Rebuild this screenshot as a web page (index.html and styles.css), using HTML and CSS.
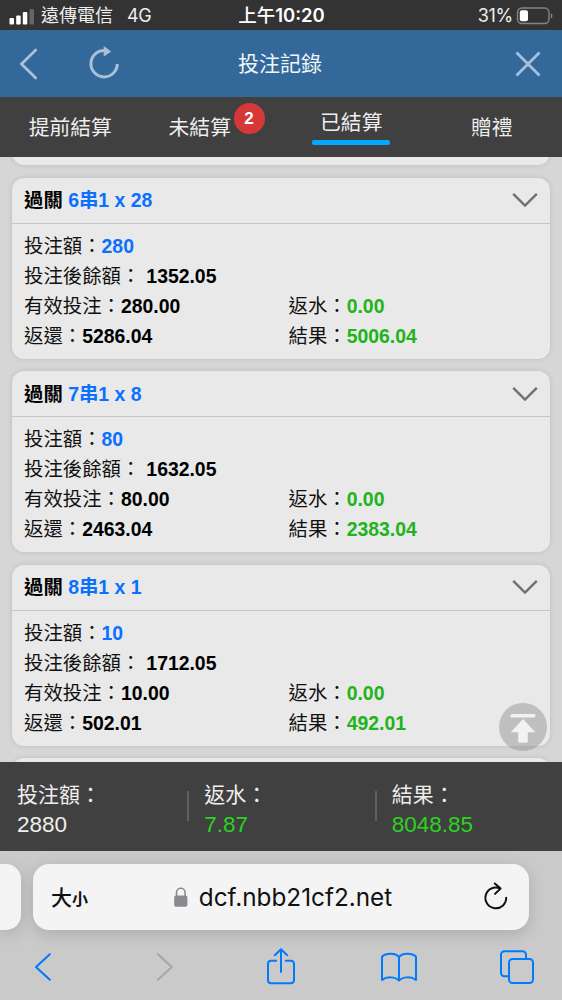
FILE: index.html
```html
<!DOCTYPE html>
<html lang="zh-Hant">
<head>
    <meta charset="UTF-8">
    <meta name="viewport" content="width=device-width, initial-scale=1.0">
    <title>投注記錄</title>
    <link rel="stylesheet" href="styles.css">
</head>
<body>

    <div class="status-bar">
        <div class="status-left">
            <svg class="signal" width="26" height="18" viewBox="0 0 26 18">
                <rect x="0.5" y="11" width="4.5" height="6.500" rx="1" fill="#fff"/>
                <rect x="7.2" y="8.500" width="4.5" height="9" rx="1" fill="#fff"/>
                <rect x="13.8" y="5" width="4.5" height="12.5" rx="1" fill="#fff"/>
                <rect x="20.5" y="2" width="4.5" height="15.5" rx="1" fill="#666"/>
            </svg>
            <span class="carrier">遠傳電信</span>
            <span class="network">4G</span>
        </div>
        <div class="status-time">上午<span class="clock">10:20</span></div>
        <div class="status-right">
            <span class="percent">31%</span>
            <svg width="38" height="18" viewBox="0 0 38 18">
                <rect x="1.500" y="1" width="31.5" height="15.5" rx="4.5" fill="none" stroke="#858585" stroke-width="1.4"/>
                <rect x="3.800" y="3.3" width="8.2" height="11" rx="2" fill="#fff"/>
                <path d="M34.800 6.2a3 3 0 0 1 0 5.4z" fill="#858585"/>
            </svg>
        </div>
    </div>

    <div class="header">
        <div class="header-left">
            <svg width="20" height="34" viewBox="0 0 20 34"><path d="M17.5 2.2 2.5 17l15 14.8" fill="none" stroke="#a9c0d8" stroke-width="2.8"/></svg>
            <svg width="32" height="34" viewBox="0 0 32 34">
                <path d="M16.500 3.500A13.2 13.2 0 1 0 29.300 17" fill="none" stroke="#a9c0d8" stroke-width="3"/>
                <path d="M15.700 -1v10.800L23.200 4.500z" fill="#a9c0d8"/>
            </svg>
        </div>
        <div class="title">投注記錄</div>
        <svg class="close" width="26" height="26" viewBox="0 0 26 26"><path d="M1.5 1.5l23 23M24.5 1.5l-23 23" fill="none" stroke="#a9c0d8" stroke-width="2.8"/></svg>
    </div>

    <div class="tabs">
        <div class="tab">提前結算</div>
        <div class="tab"><span class="tab-label">未結算<span class="badge">2</span></span></div>
        <div class="tab active">已結算</div>
        <div class="tab">贈禮</div>
    </div>

    <div class="list">
        <div class="card card-before"></div>

        <div class="card">
            <div class="card-head">
                <div class="card-name">過關 <span class="blue">6串1 x 28</span></div>
                <svg width="26" height="16" viewBox="0 0 26 16"><path d="M1.2 1.8 13 13.6 24.8 1.8" fill="none" stroke="#707070" stroke-width="2.4"/></svg>
            </div>
            <div class="card-body">
                <div class="wide">投注額：<b class="blue">280</b></div>
                <div class="wide">投注後餘額：<b class="balance">1352.05</b></div>
                <div>有效投注：<b>280.00</b></div>
                <div>返水：<b class="green">0.00</b></div>
                <div>返還：<b>5286.04</b></div>
                <div>結果：<b class="green">5006.04</b></div>
            </div>
        </div>

        <div class="card">
            <div class="card-head">
                <div class="card-name">過關 <span class="blue">7串1 x 8</span></div>
                <svg width="26" height="16" viewBox="0 0 26 16"><path d="M1.2 1.8 13 13.6 24.8 1.8" fill="none" stroke="#707070" stroke-width="2.4"/></svg>
            </div>
            <div class="card-body">
                <div class="wide">投注額：<b class="blue">80</b></div>
                <div class="wide">投注後餘額：<b class="balance">1632.05</b></div>
                <div>有效投注：<b>80.00</b></div>
                <div>返水：<b class="green">0.00</b></div>
                <div>返還：<b>2463.04</b></div>
                <div>結果：<b class="green">2383.04</b></div>
            </div>
        </div>

        <div class="card">
            <div class="card-head">
                <div class="card-name">過關 <span class="blue">8串1 x 1</span></div>
                <svg width="26" height="16" viewBox="0 0 26 16"><path d="M1.2 1.8 13 13.6 24.8 1.8" fill="none" stroke="#707070" stroke-width="2.4"/></svg>
            </div>
            <div class="card-body">
                <div class="wide">投注額：<b class="blue">10</b></div>
                <div class="wide">投注後餘額：<b class="balance">1712.05</b></div>
                <div>有效投注：<b>10.00</b></div>
                <div>返水：<b class="green">0.00</b></div>
                <div>返還：<b>502.01</b></div>
                <div>結果：<b class="green">492.01</b></div>
            </div>
        </div>

        <div class="card"></div>

        <!-- back to top -->
        <div class="to-top">
            <svg width="48" height="48" viewBox="0 0 48 48">
                <rect x="11.5" y="11" width="25" height="3.4" rx="1.5" fill="#f2f2f2"/>
                <path d="M24 16 36.3 29.2H28.8V38.5a1.3 1.3 0 0 1-1.3 1.3H20.5a1.3 1.3 0 0 1-1.3-1.3V29.2H11.7z" fill="#f2f2f2"/>
            </svg>
        </div>
    </div>

    <div class="summary">
        <div class="total">投注額：<br><span class="amount">2880</span></div>
        <div class="total">返水：<br><span class="amount win">7.87</span></div>
        <div class="total">結果：<br><span class="amount win">8048.85</span></div>
    </div>

    <div class="browser">
        <div class="address-row">
            <div class="prev-page"></div>
            <div class="address">
                <div class="text-size">大<small>小</small></div>
                <div class="url">
                    <svg width="14" height="20" viewBox="0 0 14 20">
                        <path d="M2.5 9.5V5.5a4.3 4.3 0 0 1 8.6 0v4" fill="none" stroke="#8a8a8e" stroke-width="1.6"/>
                        <rect x="0.2" y="8.6" width="13.2" height="11.2" rx="1.8" fill="#8a8a8e"/>
                    </svg>
                    <span>dcf.nbb21cf2.net</span>
                </div>
                <svg class="reload" width="24" height="28" viewBox="0 0 24 28">
                    <path d="M15.6 5.200A10.4 10.4 0 1 0 22.2 14.800M10.8 0.500l5.8 5-5.6 5.400" fill="none" stroke="#111" stroke-width="2" stroke-linecap="round" stroke-linejoin="round"/>
                </svg>
            </div>
        </div>
        <div class="toolbar">
            <svg width="38" height="28" viewBox="-10 0 38 28"><path d="M15.8 1.3 2 14l13.8 12.7" fill="none" stroke="#007aff" stroke-width="2.1" stroke-linecap="round" stroke-linejoin="round"/></svg>
            <svg width="38" height="28" viewBox="-13 0 38 28"><path d="M2 1.3 15.8 14 2 26.7" fill="none" stroke="#a6a6a6" stroke-width="2" stroke-linecap="round" stroke-linejoin="round"/></svg>
            <svg width="38" height="38" viewBox="-5 0 38 38"><path d="M10.2 12.8H5a3 3 0 0 0-3 3v16.4a3 3 0 0 0 3 3h20a3 3 0 0 0 3-3V15.8a3 3 0 0 0-3-3h-5.2M15 24V1.200M8.8 7.2 15 1.200l6.2 6" fill="none" stroke="#007aff" stroke-width="2" stroke-linecap="round" stroke-linejoin="round"/></svg>
            <svg width="38" height="32" viewBox="0 0 38 32"><path d="M19 6.3C16 1.7 6 1.5 2 5.7V29c4.5-3.600 13-3.600 17 .6 4-4.200 12.5-4.200 17-.6V5.7C32 1.5 22 1.7 19 6.3zM19 6.3V29.600" fill="none" stroke="#007aff" stroke-width="2" stroke-linecap="round" stroke-linejoin="round"/></svg>
            <svg width="38" height="36" viewBox="-1 0 38 36"><path d="M9.8 27.300H5.5A3.5 3.5 0 0 1 2 23.800V5.8a3.500 3.500 0 0 1 3.500-3.500h18A3.500 3.500 0 0 1 27 5.800v4.300" fill="none" stroke="#007aff" stroke-width="2"/><rect x="10" y="10" width="24" height="24" rx="3.5" fill="none" stroke="#007aff" stroke-width="2"/></svg>
        </div>
    </div>

</body>
</html>
```
FILE: styles.css
```css
* {
    box-sizing: border-box;
}
body {
    margin: 0;
    width: 562px;
    height: 1000px;
    overflow: hidden;
    display: flex;
    flex-direction: column;
    font-family: "Liberation Sans", "Noto Sans CJK TC", sans-serif;
    background: #d6d6d6;
}
svg {
    display: block;
    flex: none;
    overflow: visible;
}

/* phone status bar */
.status-bar {
    height: 30px;
    flex: none;
    display: grid;
    grid-template-columns: 1fr auto 1fr;
    align-items: center;
    padding: 1px 8px 0 9px;
    background: #333;
    color: #eee;
    font-family: Inter, "Noto Sans CJK TC", sans-serif;
    font-size: 18px;
    line-height: 29px;
}
.status-left, .status-right {
    display: flex;
    align-items: center;
}
.carrier {
    margin-left: 6px;
}
.network {
    margin-left: 14px;
    letter-spacing: -0.4px;
}
.status-time {
    font-weight: 500;
    font-size: 18.5px;
    color: #fff;
}
.clock {
    font-weight: 600;
}
.percent {
    letter-spacing: -0.3px;
}
.status-right {
    justify-content: flex-end;
    gap: 3px;
}

.header {
    height: 67px;
    flex: none;
    display: grid;
    grid-template-columns: 1fr auto 1fr;
    align-items: center;
    padding: 0 21px 0 19px;
    background: #33689b;
    color: #f2f5f8;
}
.header-left {
    display: flex;
    gap: 49px;
}
.title {
    font-size: 21px;
    padding-bottom: 4px;
}
.close {
    justify-self: end;
}

.tabs {
    height: 60px;
    flex: none;
    display: flex;
    background: #404040;
    color: #eee;
    font-size: 20.8px;
}
.tab {
    flex: 1;
    display: flex;
    flex-direction: column;
    align-items: center;
    padding-top: 1px;
    line-height: 60px;
}
.tab-label {
    position: relative;
    right: 11px;
}
.badge {
    position: absolute;
    left: 65px;
    top: 5px;
    width: 31px;
    height: 31px;
    border-radius: 50%;
    background: #d63838;
    color: #fff;
    font-size: 17px;
    font-weight: bold;
    line-height: 31px;
    text-align: center;
}
.active {
    line-height: 43px;
    padding-top: 4px;
}
.active::after {
    content: "";
    margin-top: -4px;
    width: 78px;
    height: 5px;
    border-radius: 2px;
    background: #00a8ff;
}

.list {
    position: relative;
    height: 605px;
    flex: none;
    overflow: hidden;
    padding: 0 12px;
}
.card {
    height: 181px;
    margin-bottom: 12.4px;
    border-radius: 12px;
    background: #e9e9e9;
    box-shadow: 0 0 5px rgba(0, 0, 0, 0.12);
    font-size: 19.4px;
    color: #111;
}
.card-before {
    margin-top: -172.6px;
}
.card-head {
    height: 46px;
    display: flex;
    align-items: center;
    justify-content: space-between;
    padding: 0 12px;
    border-bottom: 1px solid #c6c6c6;
    font-weight: bold;
    color: #000;
}
.card-name {
    padding-bottom: 3px;
}
.card-body {
    display: grid;
    grid-template-columns: 264.5px 1fr;
    grid-auto-rows: 30px;
    line-height: 30px;
    padding: 7px 12px;
}
.wide {
    grid-column: 1 / 3;
}
.card-body b {
    color: #000;
}
.balance {
    margin-left: 6px;
}
.card .blue {
    color: #0c70ff;
}
.card .green {
    color: #20b41a;
}
.to-top {
    position: absolute;
    right: 15px;
    bottom: 11px;
    width: 48px;
    height: 48px;
    border-radius: 50%;
    background: rgba(150, 150, 150, 0.5);
}

.summary {
    height: 89px;
    flex: none;
    display: flex;
    align-items: center;
    padding-top: 7px;
    background: #404040;
    color: #eee;
    font-size: 21px;
    line-height: 30px;
}
.total {
    flex: 1;
    position: relative;
    padding-left: 17px;
}
.total + .total::before {
    content: "";
    position: absolute;
    left: 0;
    top: 11px;
    width: 2px;
    height: 30px;
    background: #606060;
}
.amount {
    font-size: 22.5px;
}
.win {
    color: #2bd320;
}

/* browser bars */
.browser {
    flex: 1;
    background: #cacaca;
}
.address-row {
    display: flex;
    gap: 12px;
    padding-top: 13px;
}
.prev-page {
    width: 21px;
    height: 66px;
    border-radius: 0 15px 15px 0;
    background: #f4f4f4;
    box-shadow: 0 4px 16px rgba(0, 0, 0, 0.15);
}
.address {
    width: 496px;
    height: 66px;
    display: flex;
    align-items: center;
    justify-content: space-between;
    padding: 0 21px 0 18px;
    border-radius: 16px;
    background: #f4f4f4;
    box-shadow: 0 4px 16px rgba(0, 0, 0, 0.15);
    color: #111;
}
.text-size {
    font-size: 21px;
    font-weight: 500;
    padding-bottom: 3px;
}
.text-size small {
    font-size: 16px;
    font-weight: bold;
}
.url {
    display: flex;
    align-items: center;
    gap: 11px;
    margin-right: 6px;
    padding-bottom: 1px;
    font-family: Inter, sans-serif;
    font-size: 24.3px;
}
.toolbar {
    display: flex;
    align-items: center;
    justify-content: space-between;
    height: 74px;
    padding: 0 26px 0 24px;
}
```
